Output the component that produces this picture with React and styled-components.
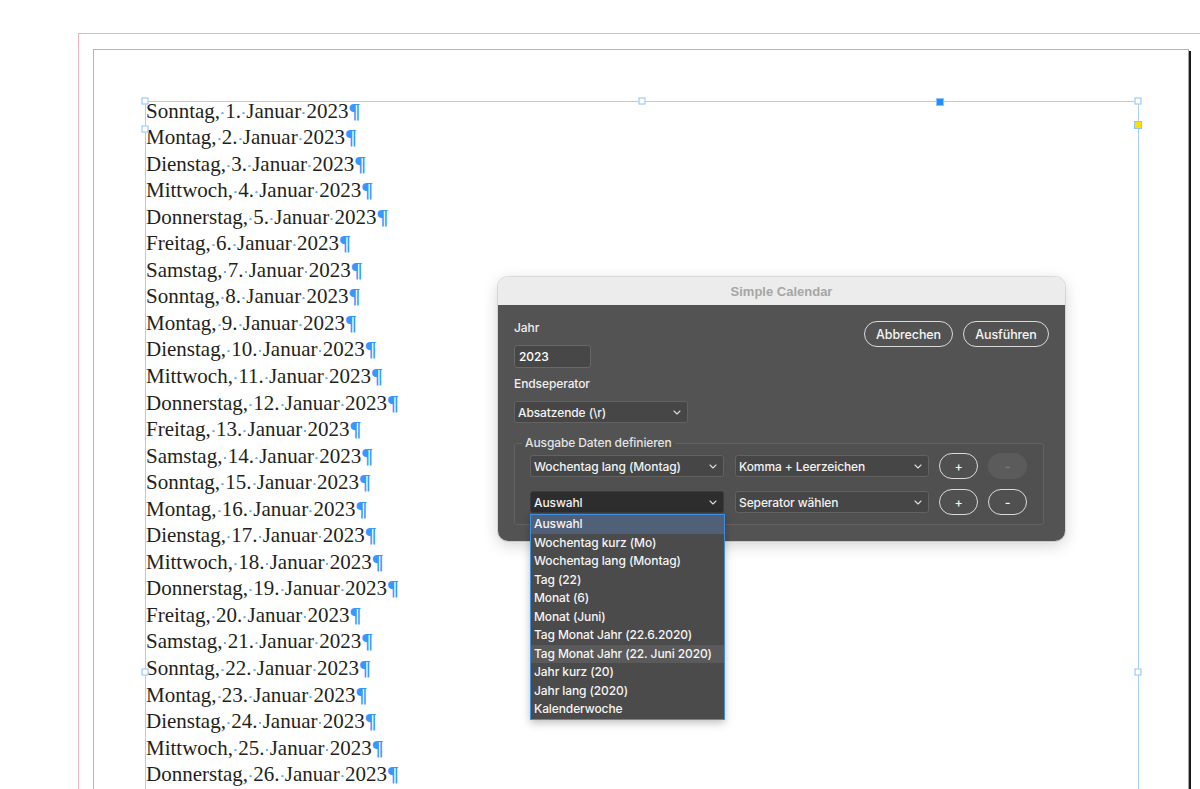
import { Fragment } from 'react';
import styled, { createGlobalStyle } from 'styled-components';

const days = ['Sonntag', 'Montag', 'Dienstag', 'Mittwoch', 'Donnerstag', 'Freitag', 'Samstag'];
const lines = Array.from({ length: 26 }, (_, i) => `${days[i % 7]}, ${i + 1}. Januar 2023`);

const options = [
  'Auswahl',
  'Wochentag kurz (Mo)',
  'Wochentag lang (Montag)',
  'Tag (22)',
  'Monat (6)',
  'Monat (Juni)',
  'Tag Monat Jahr (22.6.2020)',
  'Tag Monat Jahr (22. Juni 2020)',
  'Jahr kurz (20)',
  'Jahr lang (2020)',
  'Kalenderwoche',
];

const Chevron = () => (
  <svg width="8" height="5" viewBox="0 0 8 5" fill="none">
    <path d="M1 1l3 3 3-3" stroke="#dcdcdc" strokeWidth="1.1" strokeLinecap="round" strokeLinejoin="round" />
  </svg>
);

const Select = ({ value, width, active }) => (
  <SelectBox $w={width} $active={active}>
    <span>{value}</span>
    <Chevron />
  </SelectBox>
);

const Line = ({ text }) => (
  <TextLine>
    {text.split(' ').map((w, i) => (
      <Fragment key={i}>
        {i > 0 && <Space> </Space>}
        {w}
      </Fragment>
    ))}
    <Pilcrow>¶</Pilcrow>
  </TextLine>
);

const App = () => (
  <>
    <GlobalStyle />
    <Desk>
      <Bleed>
        <Page>
          <Frame>
            <Handle $x={145} $y={101} />
            <Handle $x={642} $y={101} />
            <Handle $x={940} $y={102} $fill="#1e8fff" $size={8} />
            <Handle $x={1138} $y={101} />
            <Handle $x={1138} $y={125} $fill="#ffde00" $size={8} />
            <Handle $x={145} $y={129} />
            <Handle $x={145} $y={672} />
            <Handle $x={1138} $y={672} />
            <Story>
              {lines.map(l => (
                <Line key={l} text={l} />
              ))}
            </Story>
          </Frame>
        </Page>
      </Bleed>

      <Dialog>
        <TitleBar>Simple Calendar</TitleBar>
        <Body>
          <TopRow>
            <Fields>
              <Label>Jahr</Label>
              <TextInput defaultValue="2023" />
              <Label>Endseperator</Label>
              <Select value="Absatzende (\r)" width={174} />
            </Fields>
            <Actions>
              <PillButton $w={89}>Abbrechen</PillButton>
              <PillButton $w={86}>Ausführen</PillButton>
            </Actions>
          </TopRow>

          <Group>
            <Legend>Ausgabe Daten definieren</Legend>
            <Row>
              <Select value="Wochentag lang (Montag)" width={194} />
              <Select value="Komma + Leerzeichen" width={194} />
              <PillButton $w={39}>+</PillButton>
              <PillButton $w={39} disabled>-</PillButton>
            </Row>
            <Row>
              <DropWrap>
                <Select value="Auswahl" width={194} active />
                <Menu>
                  {options.map((o, i) => (
                    <MenuItem key={o} $selected={i === 0} $hover={i === 7}>
                      {o}
                    </MenuItem>
                  ))}
                </Menu>
              </DropWrap>
              <Select value="Seperator wählen" width={194} />
              <PillButton $w={39}>+</PillButton>
              <PillButton $w={39}>-</PillButton>
            </Row>
          </Group>
        </Body>
      </Dialog>
    </Desk>
  </>
);

export default App;

const GlobalStyle = createGlobalStyle`
  html, body {
    margin: 0;
    padding: 0;
    background: #fff;
    overflow: hidden;
  }
`;

const Desk = styled.div`
  position: relative;
  width: 1200px;
  height: 789px;
  overflow: hidden;
  box-sizing: border-box;
  padding: 33px 0 0 78px;
  background: #fff;
`;

const Bleed = styled.div`
  width: 1200px;
  height: 1400px;
  border-top: 1px solid #f4b3bb;
  border-left: 1px solid #f4b3bb;
  padding: 15px 0 0 14px;
`;

const Page = styled.div`
  width: 1096px;
  height: 1400px;
  border-top: 1px solid #b5b5b5;
  border-left: 1px solid #b5b5b5;
  border-right: 1px solid #a5a5a5;
  box-shadow: 2px 2px 0 #1c1c1c;
  padding: 51px 0 0 51px;
  box-sizing: border-box;
`;

const Frame = styled.div`
  position: relative;
  width: 992px;
  height: 1142px;
  border: 1px solid #a9cff7;
  border-bottom: none;
`;

const Handle = styled.span`
  position: absolute;
  left: ${p => p.$x - 146}px;
  top: ${p => p.$y - 102}px;
  width: ${p => (p.$size || 7) - 2}px;
  height: ${p => (p.$size || 7) - 2}px;
  background: ${p => p.$fill || '#fff'};
  border: 1px solid #8fc2f6;
  transform: translate(-50%, -50%);
  z-index: 1;
`;

const Story = styled.div`
  margin-top: -4.5px;
  font-family: 'Liberation Serif', 'Times New Roman', serif;
  font-size: 21px;
  line-height: 26.55px;
  color: #231f20;
  white-space: nowrap;
`;

const TextLine = styled.div``;

const Space = styled.span`
  white-space: pre;
  background: radial-gradient(circle at 50% 59%, #6aaef5 0 0.9px, transparent 1.4px);
`;

const Pilcrow = styled.span`
  color: #3598ff;
  font-weight: 700;
  font-size: 22px;
`;

const Dialog = styled.div`
  position: absolute;
  left: 498px;
  top: 277px;
  width: 567px;
  border-radius: 10px;
  box-shadow: 0 0 0 1px rgba(0, 0, 0, 0.1), 0 4px 16px rgba(0, 0, 0, 0.18);
  font-family: Inter, 'Liberation Sans', sans-serif;
  font-size: 12px;
  font-weight: 500;
  letter-spacing: -0.1px;
  color: #f2f2f2;
`;

const TitleBar = styled.div`
  height: 28px;
  background: #ececec;
  border-radius: 10px 10px 0 0;
  display: flex;
  align-items: center;
  justify-content: center;
  font: 700 13px 'Liberation Sans', Arial, sans-serif;
  letter-spacing: 0;
  color: #a6a6a6;
`;

const Body = styled.div`
  height: 236px;
  box-sizing: border-box;
  background: #535353;
  border-radius: 0 0 10px 10px;
  padding: 15px 16px 15px;
`;

const TopRow = styled.div`
  display: flex;
  justify-content: space-between;
  align-items: flex-start;
`;

const Fields = styled.div`
  display: flex;
  flex-direction: column;
  align-items: flex-start;
`;

const Label = styled.div`
  line-height: 16px;
  margin-bottom: 9px;
  color: #f0f0f0;
`;

const TextInput = styled.input`
  width: 77px;
  height: 23px;
  box-sizing: border-box;
  margin: 0 0 8px;
  padding: 0 4px;
  background: #474747;
  border: 1px solid #686868;
  border-radius: 3px;
  color: #fff;
  font: inherit;
  letter-spacing: inherit;
  outline: none;
`;

const SelectBox = styled.div`
  width: ${p => p.$w}px;
  height: 22px;
  box-sizing: border-box;
  display: flex;
  align-items: center;
  justify-content: space-between;
  padding: 0 6px 0 3px;
  background: ${p => (p.$active ? '#2d2d2d' : '#464646')};
  border: 1px solid ${p => (p.$active ? '#3c3c3c' : '#626262')};
  border-radius: 3px;
  color: #f2f2f2;
  white-space: nowrap;
`;

const Actions = styled.div`
  display: flex;
  gap: 10px;
  margin-top: 1px;
`;

const PillButton = styled.button`
  width: ${p => p.$w}px;
  height: 26px;
  box-sizing: border-box;
  padding: 0;
  border-radius: 13px;
  border: 1px solid #dadada;
  background: transparent;
  color: #f5f5f5;
  font: inherit;
  font-size: 12.5px;
  letter-spacing: inherit;

  &:disabled {
    border-color: transparent;
    background: #5b5b5b;
    color: #7c7c7c;
  }
`;

const Group = styled.fieldset`
  margin: 12px 6px 0 0;
  padding: 2px 16px 9px 15px;
  border: 1px solid #636363;
  border-radius: 3px;
  background: rgba(0, 0, 0, 0.03);
  display: flex;
  flex-direction: column;
  gap: 10px;
`;

const Legend = styled.legend`
  margin-left: -8px;
  padding: 0 3px;
  line-height: 16px;
  color: #e4e4e4;
`;

const Row = styled.div`
  display: flex;
  align-items: center;
  gap: 10px;

  & > :nth-child(2) {
    margin-left: 1px;
  }
`;

const DropWrap = styled.div`
  position: relative;
`;

const Menu = styled.div`
  position: absolute;
  left: 0;
  top: 100%;
  width: 195px;
  box-sizing: border-box;
  margin-top: 1px;
  background: #4b4b4b;
  border: 1px solid #3e8fe0;
  box-shadow: 0 3px 8px rgba(0, 0, 0, 0.25);
  z-index: 2;
`;

const MenuItem = styled.div`
  height: 18.5px;
  line-height: 18.5px;
  padding-left: 3px;
  white-space: nowrap;
  color: #f5f5f5;
  background: ${p => (p.$selected ? '#506079' : p.$hover ? '#5a5a5a' : 'transparent')};
`;
